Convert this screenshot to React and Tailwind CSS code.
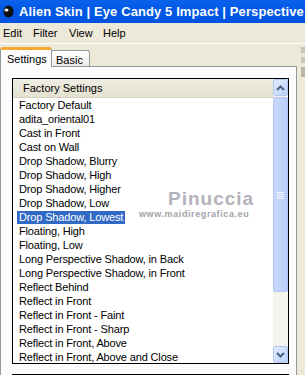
const presets = [
  "Factory Default",
  "adita_oriental01",
  "Cast in Front",
  "Cast on Wall",
  "Drop Shadow, Blurry",
  "Drop Shadow, High",
  "Drop Shadow, Higher",
  "Drop Shadow, Low",
  "Drop Shadow, Lowest",
  "Floating, High",
  "Floating, Low",
  "Long Perspective Shadow, in Back",
  "Long Perspective Shadow, in Front",
  "Reflect Behind",
  "Reflect in Front",
  "Reflect in Front - Faint",
  "Reflect in Front - Sharp",
  "Reflect in Front, Above",
  "Reflect in Front, Above and Close",
];

const selected = "Drop Shadow, Lowest";

const ScrollButton = ({ up }) => (
  <div className="h-[17px] w-[15px] rounded-[2px] border border-[#b4c8f6] bg-[linear-gradient(135deg,#e3ecfe,#bcd0fb)] flex items-center justify-center">
    <svg width="9" height="6" viewBox="0 0 9 6">
      <path
        d={up ? "M1 5 L4.5 1.5 L8 5" : "M1 1 L4.5 4.5 L8 1"}
        fill="none"
        stroke="#4d6185"
        strokeWidth="2"
      />
    </svg>
  </div>
);

const App = () => {
  return (
    <div
      className="w-[305px] h-[375px] overflow-hidden bg-[#ece9d8] relative"
      style={{ fontFamily: '"Liberation Sans", Arial, sans-serif' }}
    >
      {/* title bar */}
      <div className="h-[23px] bg-[linear-gradient(180deg,#0a62ec_0%,#0058e6_40%,#0053df_100%)] flex items-center pl-[3px] gap-[5px] whitespace-nowrap">
        <svg width="11" height="13" viewBox="0 0 11 13" className="shrink-0">
          <ellipse cx="5.5" cy="6.5" rx="5" ry="6" fill="#111" />
          <ellipse cx="3.5" cy="5" rx="2" ry="1.6" fill="#fff" />
        </svg>
        <span className="text-white font-bold text-[13px] tracking-[0.1px]">
          Alien Skin | Eye Candy 5 Impact | Perspective
        </span>
      </div>

      {/* menu bar */}
      <div className="h-[20px] flex items-center pl-[3px] text-[11px] text-black">
        <span className="w-[30px]">Edit</span>
        <span className="w-[36px]">Filter</span>
        <span className="w-[34px]">View</span>
        <span>Help</span>
      </div>
      <div className="h-[4px] border-t border-[#fff]" />

      {/* tabs */}
      <div className="h-[19px] flex items-end text-[11px] relative z-10">
        <div className="h-[20px] w-[52px] -mb-[1px] bg-[#fcfcfe] border-t-[3px] border-t-[#f7a934] border-x border-[#919b9c] rounded-t-[3px] pl-[6px] pt-[1px]">
          Settings
        </div>
        <div className="h-[16px] w-[38px] bg-[linear-gradient(180deg,#fff,#ecebe6)] border-t border-r border-[#919b9c] rounded-tr-[3px] pl-[4px] pt-[1px]">
          Basic
        </div>
      </div>

      {/* tab panel */}
      <div className="w-[297px] h-[320px] border border-[#919b9c] bg-[#fcfcfe] pl-[11px] pt-[11px]">
        <div className="w-[277px] h-[286px] border border-black bg-white flex text-[11px] text-black">
          <div className="flex-1 min-w-0 flex flex-col">
            <div className="h-[19px] bg-[linear-gradient(180deg,#efeee3,#e4e1d0)] border-b border-[#d6d2c2] pl-[10px] flex items-center">
              Factory Settings
            </div>
            <div className="flex-1 overflow-hidden relative tracking-[-0.15px]">
              {presets.map((name) => (
                <div key={name} className="h-[14px] flex items-center pl-[4px]">
                  <span
                    className={
                      name === selected
                        ? "bg-[#316ac5] text-white px-[2px] leading-[13px] h-[13px]"
                        : "px-[2px] leading-[13px] h-[13px]"
                    }
                  >
                    {name}
                  </span>
                </div>
              ))}
              {/* watermark */}
              <div className="absolute left-[155px] top-[87px] text-[19px] font-bold text-[#a0a0ac] opacity-80 tracking-[1px]">
                Pinuccia
              </div>
              <div className="absolute left-[126px] top-[110px] text-[9px] font-bold text-[#8c8c96] opacity-80 tracking-[0.6px]">
                www.maidiregrafica.eu
              </div>
            </div>
          </div>
          {/* scrollbar */}
          <div className="w-[15px] bg-[#f4f3ee] flex flex-col">
            <ScrollButton up />
            <div className="h-[195px] mt-[1px] rounded-[2px] border border-[#b1c6f8] bg-[linear-gradient(90deg,#c9d8fc,#bccffa)] flex items-center justify-center">
              <svg width="7" height="8" viewBox="0 0 7 8">
                <path d="M0 1.5H7M0 3.5H7M0 5.5H7M0 7.5H7" stroke="#eef3ff" strokeWidth="1" />
              </svg>
            </div>
            <div className="flex-1" />
            <ScrollButton />
          </div>
        </div>
        <div className="w-[277px] mt-[10px] border-t border-black" />
      </div>

      {/* right edge strip */}
      <div className="absolute right-0 top-[43px] w-[6px] h-[332px] flex flex-col gap-[4px] pt-[4px] pl-[2px]">
        <div className="h-[6px] w-[4px] bg-[#c8c5b6]" />
        <div className="h-[6px] w-[4px] bg-[#c8c5b6]" />
        <div className="h-[10px] w-[4px] bg-[#b8b5a6]" />
      </div>
    </div>
  );
};

export default App;
